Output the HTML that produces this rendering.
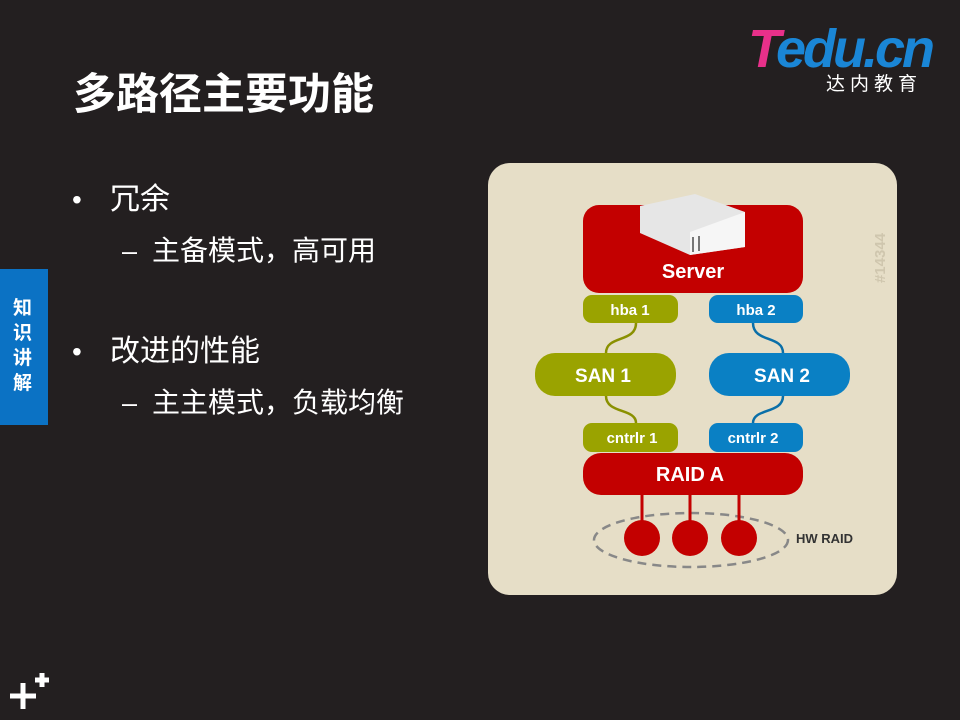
<!DOCTYPE html>
<html><head><meta charset="utf-8"><style>
body{margin:0;width:960px;height:720px;background:#231f20;position:relative;overflow:hidden;font-family:"Liberation Sans","Noto Sans CJK SC",sans-serif;color:#fff}
.t{position:absolute;white-space:nowrap}
</style></head><body>
<div class="t" style="left:73px;top:70px;font-size:43px;font-weight:bold;line-height:50px">多路径主要功能</div>
<div class="t" style="left:72px;top:181px;font-size:28px;line-height:38px">•</div>
<div class="t" style="left:110px;top:180px;font-size:30px;line-height:40px">冗余</div>
<div class="t" style="left:122px;top:232px;font-size:27px;line-height:38px">–</div>
<div class="t" style="left:152px;top:232px;font-size:28px;line-height:38px">主备模式，高可用</div>
<div class="t" style="left:72px;top:333px;font-size:28px;line-height:38px">•</div>
<div class="t" style="left:110px;top:332px;font-size:30px;line-height:40px">改进的性能</div>
<div class="t" style="left:122px;top:384px;font-size:27px;line-height:38px">–</div>
<div class="t" style="left:152px;top:384px;font-size:28px;line-height:38px">主主模式，负载均衡</div>
<div style="position:absolute;left:0;top:269px;width:48px;height:156px;background:#0b72c4"></div>
<div class="t" style="left:13px;top:296px;font-size:19px;font-weight:bold;line-height:25px;width:22px;white-space:normal">知识讲解</div>
<div class="t" style="left:748px;top:20px;font-size:54px;font-weight:bold;font-style:italic;letter-spacing:-3px;line-height:58px;color:#1a86d6"><span style="color:#e8308a">T</span>edu.cn</div>
<div class="t" style="left:826px;top:73px;font-size:19px;letter-spacing:5px;line-height:24px">达内教育</div>
<svg style="position:absolute;left:0;top:0" width="960" height="720">
<path d="M10 696h26M23 683v26M35 680h14M42 673v14" stroke="#fff" stroke-width="5"/>
<rect x="488" y="163" width="409" height="432" rx="22" fill="#e6dec7"/>
<text x="885" y="258" transform="rotate(-90 885 258)" text-anchor="middle" font-size="15" font-weight="bold" fill="#cfc6ae" font-family="Liberation Sans">#14344</text>
<g fill="none" stroke-width="2.5">
<path d="M636 323c0 20-30 12-30 30M606 396c0 18 30 12 30 27" stroke="#8a9000"/>
<path d="M753 323c0 20 30 12 30 30M783 396c0 18-30 12-30 27" stroke="#0a6fa8"/>
</g>
<rect x="583" y="205" width="220" height="88" rx="16" fill="#c30000"/>
<path d="M640 206l55-12 50 18v35l-55 8-50-22z" fill="#e6e6e6"/>
<path d="M690 232l55-20v35l-55 8z" fill="#f6f6f6"/><path d="M693 237v15M699 236v15" stroke="#777" stroke-width="2"/>
<text x="693" y="278" text-anchor="middle" font-size="20" font-weight="bold" fill="#fff" font-family="Liberation Sans">Server</text>
<rect x="583" y="295" width="95" height="28" rx="9" fill="#9aa300"/>
<rect x="709" y="295" width="94" height="28" rx="9" fill="#0a80c4"/>
<rect x="535" y="353" width="141" height="43" rx="20" fill="#9aa300"/>
<rect x="709" y="353" width="141" height="43" rx="20" fill="#0a80c4"/>
<rect x="583" y="423" width="95" height="29" rx="9" fill="#9aa300"/>
<rect x="709" y="423" width="94" height="29" rx="9" fill="#0a80c4"/>
<rect x="583" y="453" width="220" height="42" rx="18" fill="#c30000"/>
<g font-family="Liberation Sans" font-weight="bold" fill="#fff" text-anchor="middle">
<text x="630" y="315" font-size="15">hba 1</text>
<text x="756" y="315" font-size="15">hba 2</text>
<text x="603" y="382" font-size="19">SAN 1</text>
<text x="782" y="382" font-size="19">SAN 2</text>
<text x="632" y="443" font-size="15">cntrlr 1</text>
<text x="753" y="443" font-size="15">cntrlr 2</text>
<text x="690" y="481" font-size="20">RAID A</text>
</g>
<ellipse cx="691" cy="540" rx="97" ry="27" fill="none" stroke="#888" stroke-width="2.5" stroke-dasharray="9 6"/>
<path d="M642 495v43M690 495v43M739 495v43" stroke="#c30000" stroke-width="3"/>
<circle cx="642" cy="538" r="18" fill="#c30000"/><circle cx="690" cy="538" r="18" fill="#c30000"/><circle cx="739" cy="538" r="18" fill="#c30000"/>
<text x="796" y="543" font-size="13" font-weight="bold" fill="#333" font-family="Liberation Sans">HW RAID</text>
</svg>
</body></html>
